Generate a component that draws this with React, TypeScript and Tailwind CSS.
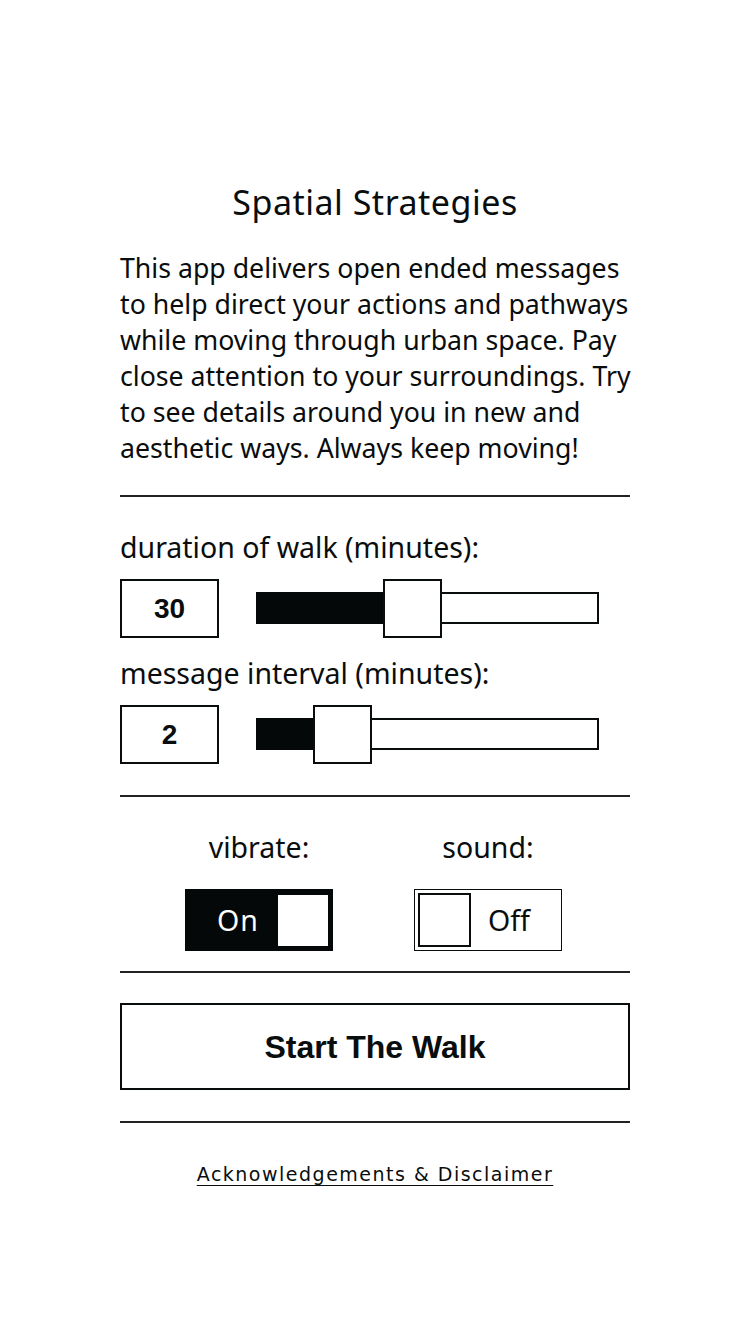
import React, { useState } from 'react'

const body = { fontFamily: '"Noto Sans", Lato, sans-serif' }
const bold = { fontFamily: '"Liberation Sans", Arial, sans-serif' }

function Slider({ fill }: { fill: number }) {
  // fill = px width of the black part of the track
  return (
    <div className="relative ml-[37px] h-[59px] w-[343px]">
      <div className="absolute left-0 right-0 top-[13px] h-[32px] border-2 border-[#0a0d0d] bg-white" />
      <div className="absolute left-0 top-[13px] h-[32px] bg-[#050808]" style={{ width: fill }} />
      <div
        className="absolute top-0 h-[59px] w-[59px] border-2 border-[#0a0d0d] bg-white"
        style={{ left: fill - 1 }}
      />
    </div>
  )
}

function NumberRow({ value, fill }: { value: string; fill: number }) {
  return (
    <div className="flex items-center">
      <div
        className="flex h-[59px] w-[99px] items-center justify-center border-2 border-[#0a0d0d] text-[28px] font-bold text-[#0a0d0d]"
        style={bold}
      >
        {value}
      </div>
      <Slider fill={fill} />
    </div>
  )
}

export default function App() {
  const [vibrate, setVibrate] = useState(true)
  const [sound, setSound] = useState(false)

  return (
    <div className="min-h-screen bg-white text-[#0a0d0d]" style={body}>
      <main className="mx-auto flex w-[510px] flex-col pt-[182px]">
        <h1 className="text-center text-[34px] leading-[40px] tracking-[0.5px]">Spatial Strategies</h1>

        <p className="-mr-[8px] mt-[28px] text-[26.7px] leading-[36px]">
          This app delivers open ended messages to help direct your actions and pathways while moving through urban
          space. Pay close attention to your surroundings. Try to see details around you in new and aesthetic ways.
          Always keep moving!
        </p>

        <div className="mt-[29px] h-[2px] bg-[#222]" />

        <label className="mt-[32px] text-[28.5px] leading-[36px]">duration of walk (minutes):</label>
        <div className="mt-[14px]">
          <NumberRow value="30" fill={128} />
        </div>

        <label className="mt-[17px] text-[28.5px] leading-[36px]">message interval (minutes):</label>
        <div className="mt-[14px]">
          <NumberRow value="2" fill={58} />
        </div>

        <div className="mt-[31px] h-[2px] bg-[#222]" />

        {/* toggles */}
        <div className="mt-[32px] flex justify-center gap-[81px] pr-[3px]">
          <div className="flex w-[148px] flex-col items-center">
            <span className="text-[28.5px] leading-[36px]">vibrate:</span>
            <button
              onClick={() => setVibrate(!vibrate)}
              className="mt-[24px] flex h-[62px] w-[148px] items-center justify-between bg-[#050808] pl-[32px] pr-[5px]"
            >
              <span className="text-[28.5px] tracking-[1px] text-white">On</span>
              <span className="h-[51px] w-[50px] bg-white" />
            </button>
          </div>
          <div className="flex w-[148px] flex-col items-center">
            <span className="text-[28.5px] leading-[36px]">sound:</span>
            <button
              onClick={() => setSound(!sound)}
              className="mt-[24px] flex h-[62px] w-[148px] items-center border border-[#0a0d0d] bg-white pl-[3px]"
            >
              <span className="h-[54px] w-[53px] border-2 border-[#0a0d0d]" />
              <span className="ml-[17px] text-[28.5px] text-[#0a0d0d]">Off</span>
            </button>
          </div>
        </div>

        <div className="mt-[20px] h-[2px] bg-[#222]" />

        <button
          className="mt-[30px] h-[87px] w-full border-2 border-[#0a0d0d] text-[32px] font-bold"
          style={bold}
        >
          Start The Walk
        </button>

        <div className="mt-[31px] h-[2px] bg-[#222]" />

        <a
          href="#"
          className="mt-[37px] text-center text-[19px] leading-[28px] tracking-[1.5px] underline underline-offset-[4px]"
          style={{ fontFamily: '"DejaVu Sans", Verdana, sans-serif' }}
        >
          Acknowledgements &amp; Disclaimer
        </a>
      </main>
    </div>
  )
}
